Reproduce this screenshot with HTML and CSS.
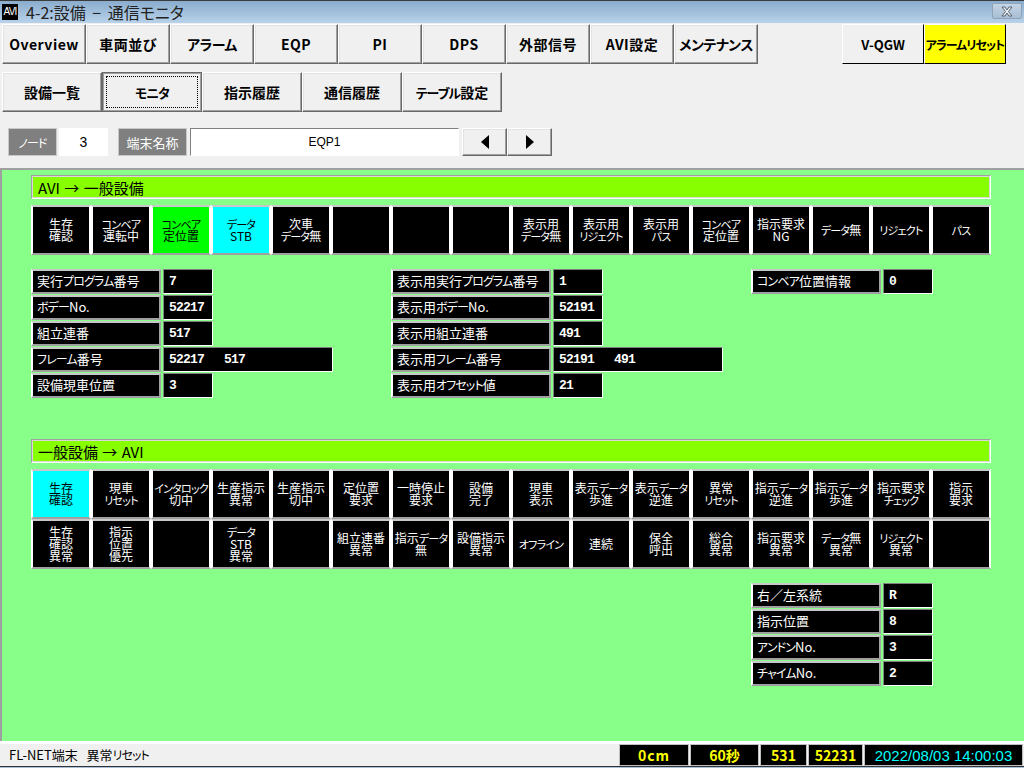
FILE: index.html
```html
<!DOCTYPE html>
<html lang="ja">

<head>
    <meta charset="UTF-8">
    <meta name="viewport" content="width=device-width, initial-scale=1.0">
    <title>4-2:設備 - 通信モニタ</title>
    <link rel="stylesheet" href="styles.css">
</head>

<body>
    <div class="window">
        <div class="titlebar">
            <span class="app-icon">AVI</span>
            <span class="title-text">4-2:設備 − 通信モニタ</span>
            <span class="close-btn">
                <svg width="16" height="11" viewBox="0 0 16 11">
                    <path d="M3 1h3l2 3 2-3h3l-3.500 4.500 3.500 4.500h-3l-2-3-2 3h-3l3.500-4.500z" fill="#e8eef4" stroke="#5a6470" stroke-width="1"/>
                </svg>
            </span>
        </div>

        <div class="toolbar">
            <div class="nav-row">
                <div class="nav-main">
                    <button class="btn nav-btn">Overview</button>
                    <button class="btn nav-btn">車両並び</button>
                    <button class="btn nav-btn nav-kana">アラーム</button>
                    <button class="btn nav-btn">EQP</button>
                    <button class="btn nav-btn">PI</button>
                    <button class="btn nav-btn">DPS</button>
                    <button class="btn nav-btn">外部信号</button>
                    <button class="btn nav-btn">AVI設定</button>
                    <button class="btn nav-btn nav-kana">メンテナンス</button>
                </div>
                <div class="nav-side">
                    <button class="btn side-btn">V-QGW</button>
                    <button class="btn side-btn alarm-reset">アラームリセット</button>
                </div>
            </div>

            <div class="sub-row">
                <button class="btn sub-btn">設備一覧</button>
                <button class="btn sub-btn active"><span class="focus"><span class="k">モニタ</span></span></button>
                <button class="btn sub-btn">指示履歴</button>
                <button class="btn sub-btn">通信履歴</button>
                <button class="btn sub-btn"><span class="k">テーブル</span>設定</button>
            </div>

            <div class="node-row">
                <span class="tag tag-node"><span class="k">ノード</span></span>
                <span class="field field-node">3</span>
                <span class="tag tag-name">端末名称</span>
                <span class="field field-name">EQP1</span>
                <button class="btn arrow-btn" aria-label="前">
                    <svg width="8" height="14" viewBox="0 0 8 14"><path d="M8 0v14L0 7z" fill="#000"/></svg>
                </button>
                <button class="btn arrow-btn" aria-label="次">
                    <svg width="8" height="14" viewBox="0 0 8 14"><path d="M0 0v14l8-7z" fill="#000"/></svg>
                </button>
            </div>
        </div>

        <div class="panel">
            <div class="section-title">AVI → 一般設備</div>
            <div class="signal-grid">
                <div class="signal"><p>生存<br>確認</p></div>
                <div class="signal"><p><span class="k">コンベア</span><br>運転中</p></div>
                <div class="signal on-green"><p><span class="k">コンベア</span><br>定位置</p></div>
                <div class="signal on-cyan"><p><span class="k">データ</span><br>STB</p></div>
                <div class="signal"><p>次車<br><span class="k">データ</span>無</p></div>
                <div class="signal"></div>
                <div class="signal"></div>
                <div class="signal"></div>
                <div class="signal"><p>表示用<br><span class="k">データ</span>無</p></div>
                <div class="signal"><p>表示用<br><span class="k">リジェクト</span></p></div>
                <div class="signal"><p>表示用<br><span class="k">パス</span></p></div>
                <div class="signal"><p><span class="k">コンベア</span><br>定位置</p></div>
                <div class="signal"><p>指示要求<br>NG</p></div>
                <div class="signal"><p><span class="k">データ</span>無</p></div>
                <div class="signal"><p><span class="k">リジェクト</span></p></div>
                <div class="signal"><p><span class="k">パス</span></p></div>
            </div>

            <div class="data-columns">
                <div class="data-col">
                    <div class="data-row"><span class="data-label">実行<span class="k">プログラム</span>番号</span><span class="data-value">7</span></div>
                    <div class="data-row"><span class="data-label"><span class="k">ボデー</span>No.</span><span class="data-value">52217</span></div>
                    <div class="data-row"><span class="data-label">組立連番</span><span class="data-value">517</span></div>
                    <div class="data-row"><span class="data-label"><span class="k">フレーム</span>番号</span><span class="data-value long"><span>52217</span><span>517</span></span></div>
                    <div class="data-row"><span class="data-label">設備現車位置</span><span class="data-value">3</span></div>
                </div>
                <div class="data-col">
                    <div class="data-row"><span class="data-label wide">表示用実行<span class="k">プログラム</span>番号</span><span class="data-value">1</span></div>
                    <div class="data-row"><span class="data-label wide">表示用<span class="k">ボデー</span>No.</span><span class="data-value">52191</span></div>
                    <div class="data-row"><span class="data-label wide">表示用組立連番</span><span class="data-value">491</span></div>
                    <div class="data-row"><span class="data-label wide">表示用<span class="k">フレーム</span>番号</span><span class="data-value long"><span>52191</span><span>491</span></span></div>
                    <div class="data-row"><span class="data-label wide">表示用<span class="k">オフセット</span>値</span><span class="data-value">21</span></div>
                </div>
                <div class="data-col">
                    <div class="data-row"><span class="data-label"><span class="k">コンベア</span>位置情報</span><span class="data-value">0</span></div>
                </div>
            </div>

            <div class="section-title second">一般設備 → AVI</div>
            <div class="signal-grid">
                <div class="signal on-cyan"><p>生存<br>確認</p></div>
                <div class="signal"><p>現車<br><span class="k">リセット</span></p></div>
                <div class="signal"><p><span class="k">インタロック</span><br>切中</p></div>
                <div class="signal"><p>生産指示<br>異常</p></div>
                <div class="signal"><p>生産指示<br>切中</p></div>
                <div class="signal"><p>定位置<br>要求</p></div>
                <div class="signal"><p>一時停止<br>要求</p></div>
                <div class="signal"><p>設備<br>完了</p></div>
                <div class="signal"><p>現車<br>表示</p></div>
                <div class="signal"><p>表示<span class="k">データ</span><br>歩進</p></div>
                <div class="signal"><p>表示<span class="k">データ</span><br>逆進</p></div>
                <div class="signal"><p>異常<br><span class="k">リセット</span></p></div>
                <div class="signal"><p>指示<span class="k">データ</span><br>逆進</p></div>
                <div class="signal"><p>指示<span class="k">データ</span><br>歩進</p></div>
                <div class="signal"><p>指示要求<br><span class="k">チェック</span></p></div>
                <div class="signal"><p>指示<br>要求</p></div>

                <div class="signal"><p>生存<br>確認<br>異常</p></div>
                <div class="signal"><p>指示<br>位置<br>優先</p></div>
                <div class="signal"></div>
                <div class="signal"><p><span class="k">データ</span><br>STB<br>異常</p></div>
                <div class="signal"></div>
                <div class="signal"><p>組立連番<br>異常</p></div>
                <div class="signal"><p>指示<span class="k">データ</span><br>無</p></div>
                <div class="signal"><p>設備指示<br>異常</p></div>
                <div class="signal"><p><span class="k">オフライン</span></p></div>
                <div class="signal"><p>連続</p></div>
                <div class="signal"><p>保全<br>呼出</p></div>
                <div class="signal"><p>総合<br>異常</p></div>
                <div class="signal"><p>指示要求<br>異常</p></div>
                <div class="signal"><p><span class="k">データ</span>無<br>異常</p></div>
                <div class="signal"><p><span class="k">リジェクト</span><br>異常</p></div>
                <div class="signal"></div>
            </div>

            <div class="data-col bottom">
                <div class="data-row"><span class="data-label">右／左系統</span><span class="data-value">R</span></div>
                <div class="data-row"><span class="data-label">指示位置</span><span class="data-value">8</span></div>
                <div class="data-row"><span class="data-label"><span class="k">アンドン</span>No.</span><span class="data-value">3</span></div>
                <div class="data-row"><span class="data-label"><span class="k">チャイム</span>No.</span><span class="data-value">2</span></div>
            </div>
        </div>

        <div class="statusbar">
            <span class="status-msg">FL-NET端末&nbsp;&nbsp;&nbsp;異常<span class="k">リセット</span></span>
            <span class="status-cell w-dist">0cm</span>
            <span class="status-cell w-time">60秒</span>
            <span class="status-cell w-count">531</span>
            <span class="status-cell w-body">52231</span>
            <span class="status-cell w-clock">2022/08/03 14:00:03</span>
        </div>
    </div>
</body>

</html>
```

FILE: styles.css
```css
* {
    box-sizing: border-box;
}

html,
body {
    margin: 0;
    height: 100%;
    overflow: hidden;
}

body {
    font-family: "Noto Sans CJK JP", "Liberation Sans", sans-serif;
    font-feature-settings: "palt";
    background: #f0f0f0;
    color: #000;
}

/* narrow katakana runs */
.k {
    font-size: 0.92em;
    letter-spacing: -0.07em;
}

.window {
    display: flex;
    flex-direction: column;
    width: 1024px;
    height: 768px;
}

/* title bar */
.titlebar {
    display: flex;
    align-items: center;
    height: 23px;
    padding: 0 2px;
    background: linear-gradient(#8aaccd, #b8d2ea);
    border-top: 1px solid #3c3c3c;
    flex-shrink: 0;
}

.app-icon {
    width: 16px;
    height: 16px;
    background: #000;
    color: #fff;
    font: 10px/16px "Liberation Sans", sans-serif;
    letter-spacing: -0.8px;
    text-align: center;
    overflow: hidden;
}

.title-text {
    margin-left: 8px;
    font-size: 16px;
    line-height: 20px;
    word-spacing: 3px;
    color: #222;
    flex: 1;
}

.close-btn {
    display: flex;
    align-items: center;
    justify-content: center;
    width: 30px;
    height: 16px;
    margin-top: -2px;
    background: linear-gradient(#c4d4e4, #a8bed4);
    border: 1px solid #8ea4ba;
    border-radius: 2px;
}

/* toolbar area */
.toolbar {
    height: 147px;
    padding: 1px 0 0 2px;
    flex-shrink: 0;
    border-bottom: 2px solid #a0a0a0;
}

.btn {
    display: flex;
    align-items: center;
    justify-content: center;
    margin: 0;
    padding: 0;
    font-family: "Noto Sans CJK JP", "Liberation Sans", sans-serif;
    font-feature-settings: "palt";
    font-weight: 700;
    white-space: nowrap;
    color: #000;
    background: #f0f0f0;
    border: 1px solid;
    border-color: #fff #696969 #696969 #fff;
    box-shadow: inset -1px -1px 0 #a0a0a0, inset 1px 1px 0 #e3e3e3;
}

.nav-row {
    display: flex;
    justify-content: space-between;
    height: 40px;
    padding-right: 18px;
}

.nav-main,
.nav-side,
.sub-row {
    display: flex;
}

.nav-btn {
    width: 84px;
    height: 40px;
    font-size: 14px;
    letter-spacing: 0.5px;
}

.nav-kana {
    letter-spacing: -0.5px;
}

.side-btn {
    width: 82px;
    height: 40px;
    font-size: 13px;
    border-color: #fff #000 #000 #fff;
    box-shadow: none;
}

.alarm-reset {
    background: #ff0;
    font-size: 12px;
    letter-spacing: -1px;
}

.sub-row {
    margin-top: 8px;
}

.sub-btn {
    width: 100px;
    height: 40px;
    font-size: 14px;
}

.sub-btn.active {
    border-color: #696969;
    box-shadow: inset 0 0 0 1px #a0a0a0;
    padding: 1px;
}

.focus {
    display: flex;
    align-items: center;
    justify-content: center;
    width: 92px;
    height: 32px;
    border: 1px dotted #000;
}

.node-row {
    display: flex;
    align-items: stretch;
    height: 28px;
    margin-top: 16px;
    padding-left: 6px;
}

.tag {
    display: flex;
    align-items: center;
    justify-content: center;
    background: #808080;
    color: #fff;
    font-size: 13px;
    border: 1px solid #c8c8c8;
}

.tag-node {
    width: 49px;
}

.tag-name {
    width: 69px;
    margin-left: 10px;
}

.field {
    display: flex;
    align-items: center;
    justify-content: center;
    background: #fff;
    font-family: "Liberation Sans", sans-serif;
    font-size: 12px;
}

.field-node {
    width: 49px;
    margin-left: 2px;
    font-size: 14px;
}

.field-name {
    width: 269px;
    margin-left: 3px;
    border: 1px solid;
    border-color: #808080 #fff #fff #808080;
}

.arrow-btn {
    width: 45px;
    height: 28px;
}

.field-name + .arrow-btn {
    margin-left: 3px;
}

/* green panel */
.panel {
    flex: 1;
    padding: 5px 0 0 29px;
    background: #88ff88;
    border-left: 2px solid #a0a0a0;
    min-height: 0;
}

.section-title {
    display: flex;
    align-items: center;
    width: 960px;
    height: 24px;
    padding-left: 6px;
    font-size: 15px;
    word-spacing: 1px;
    background: #88ff00;
    border: 1px solid;
    border-color: #a0a0a0 #fff #fff #a0a0a0;
    outline: 1px solid #d8d8d8;
    outline-offset: -2px;
}

.section-title.second {
    margin-top: 41px;
}

.signal-grid {
    display: grid;
    grid-template-columns: repeat(16, 60px);
    grid-auto-rows: 50px;
    margin-top: 6px;
}

.signal {
    display: flex;
    align-items: center;
    justify-content: center;
    text-align: center;
    white-space: nowrap;
    font-size: 12px;
    line-height: 12px;
    color: #fff;
    background: #000;
    border: 2px solid;
    border-color: #c8c8c8 #fff #a0a0a0 #fff;
}

.signal p {
    margin: 0;
}

.signal.on-green {
    background: #0f0;
    color: #000;
}

.signal.on-cyan {
    background: #0ff;
    color: #000;
}

.data-columns {
    display: grid;
    grid-template-columns: 360px 360px 1fr;
    margin-top: 14px;
}

.data-col {
    display: flex;
    flex-direction: column;
    gap: 1px;
}

.data-col.bottom {
    margin: 14px 0 0 720px;
}

.data-row {
    display: flex;
    gap: 2px;
    height: 25px;
}

.data-label {
    display: block;
    width: 130px;
    padding-left: 4px;
    font-size: 13px;
    line-height: 19px;
    color: #fff;
    background: #000;
    border: 2px solid;
    border-color: #c8c8c8 #a0a0a0 #a0a0a0 #fff;
    white-space: nowrap;
    overflow: hidden;
}

.data-label.wide {
    width: 160px;
}

.data-value {
    display: flex;
    align-items: center;
    width: 50px;
    padding-left: 5px;
    font-family: "Liberation Mono", monospace;
    font-size: 13px;
    font-weight: 700;
    letter-spacing: -0.8px;
    color: #fff;
    background: #000;
    border: 1px solid;
    border-color: #808080 #fff #fff #808080;
}

.data-value.long {
    width: 170px;
    gap: 20px;
}

/* status bar */
.statusbar {
    display: flex;
    align-items: stretch;
    height: 27px;
    padding: 0 1px 1px 0;
    background: #f0f0f0;
    border-top: 3px solid #fff;
    border-bottom: 1px solid #a8c0d8;
    box-shadow: inset 0 -1px 0 #333;
    flex-shrink: 0;
}

.status-msg {
    flex: 1;
    padding-left: 9px;
    font-size: 13px;
    line-height: 22px;
}

.status-cell {
    display: flex;
    align-items: center;
    justify-content: center;
    margin-left: 1px;
    font-size: 14px;
    font-weight: 700;
    color: #ff0;
    background: #000;
    border: 1px solid #c0c0c0;
}

.w-dist {
    width: 70px;
    letter-spacing: 1px;
}

.w-time {
    width: 69px;
}

.w-count {
    width: 47px;
}

.w-body {
    width: 55px;
}

.w-clock {
    width: 159px;
    font-family: "Liberation Sans", sans-serif;
    font-size: 15px;
    font-weight: 400;
    color: #0ff;
}
```
